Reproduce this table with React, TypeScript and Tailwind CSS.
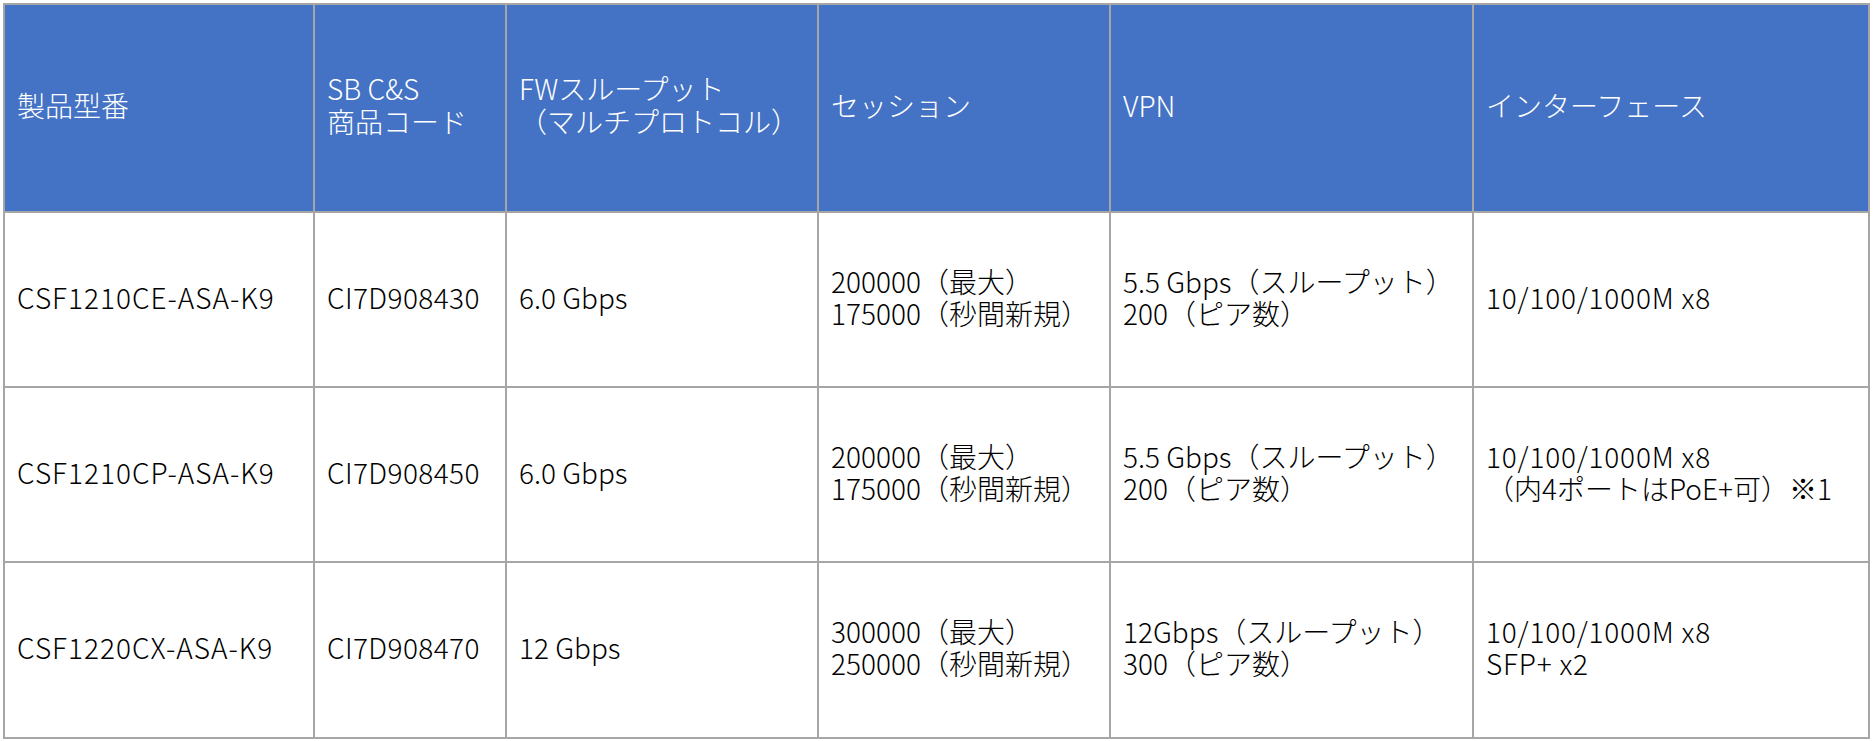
import React from "react";

const headers: string[][] = [
  ["製品型番"],
  ["SB C&S", "商品コード"],
  ["FWスループット", "（マルチプロトコル）"],
  ["セッション"],
  ["VPN"],
  ["インターフェース"],
];

const rows: string[][][] = [
  [
    ["CSF1210CE-ASA-K9"],
    ["CI7D908430"],
    ["6.0 Gbps"],
    ["200000（最大）", "175000（秒間新規）"],
    ["5.5 Gbps（スループット）", "200（ピア数）"],
    ["10/100/1000M x8"],
  ],
  [
    ["CSF1210CP-ASA-K9"],
    ["CI7D908450"],
    ["6.0 Gbps"],
    ["200000（最大）", "175000（秒間新規）"],
    ["5.5 Gbps（スループット）", "200（ピア数）"],
    ["10/100/1000M x8", "（内4ポートはPoE+可）※1"],
  ],
  [
    ["CSF1220CX-ASA-K9"],
    ["CI7D908470"],
    ["12 Gbps"],
    ["300000（最大）", "250000（秒間新規）"],
    ["12Gbps（スループット）", "300（ピア数）"],
    ["10/100/1000M x8", "SFP+ x2"],
  ],
];

const isLatin = (s: string) => /^[\x20-\x7e]+$/.test(s);

export default function App() {
  return (
    <div
      className="w-[1874px] h-[741px] bg-white p-[3px] font-light"
      style={{ fontFamily: '"Noto Sans CJK JP", "Noto Sans", sans-serif' }}
    >
      <div className="grid grid-cols-[310px_192px_312px_292px_363px_396px] grid-rows-[208px_175px_175px_176px] border-t-2 border-l-2 border-[#a6a6a6] w-max">
        {headers.map((lines, i) => (
          <div
            key={"h" + i}
            className="flex flex-col items-start justify-center pl-3 pb-1.5 bg-[#4472c4] text-white text-[28px] leading-[33px] border-r-2 border-b-2 border-[#a6a6a6]"
          >
            {lines.map((l, j) => (
              <span key={j} className="block whitespace-nowrap">{l}</span>
            ))}
          </div>
        ))}
        {rows.map((r, ri) =>
          r.map((lines, ci) => (
            <div
              key={ri + "-" + ci}
              className="flex flex-col items-start justify-center pl-3 pb-1.5 bg-white text-black text-[28px] leading-[32px] border-r-2 border-b-2 border-[#a6a6a6]"
            >
              {lines.map((l, j) => (
                <span
                  key={j}
                  className={
                    "block whitespace-nowrap" +
                    (ci === 0
                      ? " tracking-[1px]"
                      : ci === 5 && isLatin(l)
                      ? " tracking-[0.8px]"
                      : ci === 1
                      ? " tracking-[0.4px]"
                      : "")
                  }
                >
                  {l}
                </span>
              ))}
            </div>
          ))
        )}
      </div>
    </div>
  );
}
